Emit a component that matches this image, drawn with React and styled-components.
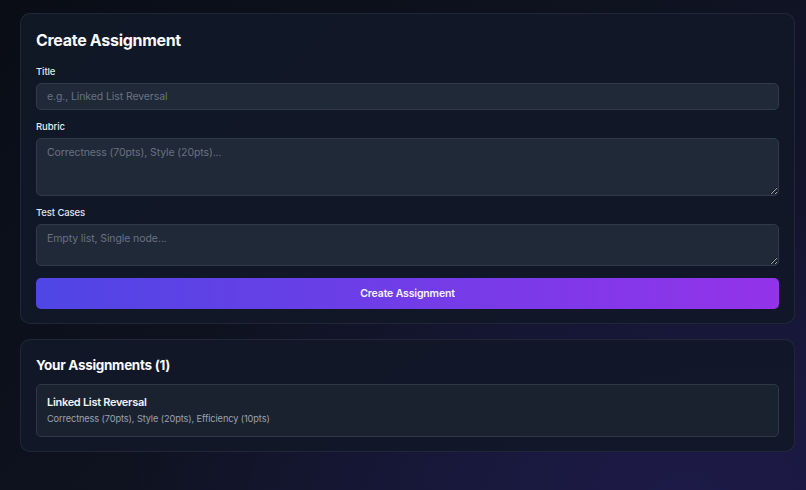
import React from "react";
import styled, { createGlobalStyle } from "styled-components";

const Global = createGlobalStyle`
  html, body { margin: 0; padding: 0; }
  body {
    min-height: 490px;
    font-family: Inter, "Noto Sans", sans-serif;
    background: radial-gradient(ellipse 70% 60% at 85% 100%, #1d1a47 0%, rgba(29,26,71,0) 100%),
      linear-gradient(135deg, #0a0d16 0%, #0e1320 50%, #141634 100%);
    color: #f9fafb;
  }
  #root { min-height: 490px; }
`;

const Page = styled.div`
  min-height: 490px;
  box-sizing: border-box;
  padding: 13px 11px 20px 20px;
  display: flex;
  flex-direction: column;
  gap: 15px;
`;

const Card = styled.section`
  background: rgba(17, 24, 39, 0.92);
  border: 1px solid rgba(45, 55, 72, 0.55);
  border-radius: 10px;
  padding: 16px 15px 14px;
  display: flex;
  flex-direction: column;
`;

const Heading = styled.h2`
  margin: 0 0 ${(p) => p.$mb}px;
  font-size: ${(p) => p.$size}px;
  line-height: ${(p) => p.$lh}px;
  font-weight: 700;
  color: #f9fafb;
  letter-spacing: -0.3px;
`;

const Field = styled.label`
  display: flex;
  flex-direction: column;
  gap: 3px;
  margin-bottom: 9px;
`;

const Label = styled.span`
  font-size: 9.5px;
  line-height: 16px;
  font-weight: 500;
  letter-spacing: -0.1px;
  color: #e5e7eb;
`;

const inputBase = `
  box-sizing: border-box;
  width: 100%;
  background: #1f2937;
  border: 1px solid #2f3a4b;
  border-radius: 5px;
  padding: 6px 10px;
  font-family: Inter, "Noto Sans", sans-serif;
  font-size: 10.5px;
  letter-spacing: -0.1px;
  line-height: 15px;
  color: #f3f4f6;
  outline: none;
  &::placeholder { color: #6b7280; }
`;

const Input = styled.input`
  ${inputBase}
  height: 27px;
`;

const TextArea = styled.textarea`
  ${inputBase}
  height: ${(p) => p.$h}px;
  resize: vertical;
  display: block;
`;

const Button = styled.button`
  margin-top: 3px;
  height: 31px;
  border: none;
  border-radius: 5px;
  background: linear-gradient(90deg, #4f46e5 0%, #9333ea 100%);
  color: #f5f3ff;
  font-family: Inter, "Noto Sans", sans-serif;
  font-size: 10.5px;
  letter-spacing: -0.15px;
  font-weight: 600;
  cursor: pointer;
`;

const Item = styled.div`
  background: #1a2230;
  border: 1px solid #2e3848;
  border-radius: 5px;
  padding: 10px 10px 10px;
  display: flex;
  flex-direction: column;
  gap: 2px;
`;

const ItemTitle = styled.div`
  font-size: 11px;
  line-height: 15px;
  font-weight: 600;
  letter-spacing: -0.3px;
  color: #f3f4f6;
`;

const ItemDesc = styled.div`
  font-size: 9.2px;
  line-height: 14px;
  letter-spacing: -0.1px;
  color: #9ca3af;
`;

export default function App() {
  return (
    <>
      <Global />
      <Page>
        <Card>
          <Heading $size={16} $lh={20} $mb={14}>Create Assignment</Heading>
          <Field>
            <Label>Title</Label>
            <Input placeholder="e.g., Linked List Reversal" />
          </Field>
          <Field>
            <Label>Rubric</Label>
            <TextArea $h={58} placeholder="Correctness (70pts), Style (20pts)..." />
          </Field>
          <Field>
            <Label>Test Cases</Label>
            <TextArea $h={42} placeholder="Empty list, Single node..." />
          </Field>
          <Button>Create Assignment</Button>
        </Card>
        <Card>
          <Heading $size={13.5} $lh={18} $mb={10}>Your Assignments (1)</Heading>
          <Item>
            <ItemTitle>Linked List Reversal</ItemTitle>
            <ItemDesc>Correctness (70pts), Style (20pts), Efficiency (10pts)</ItemDesc>
          </Item>
        </Card>
      </Page>
    </>
  );
}
